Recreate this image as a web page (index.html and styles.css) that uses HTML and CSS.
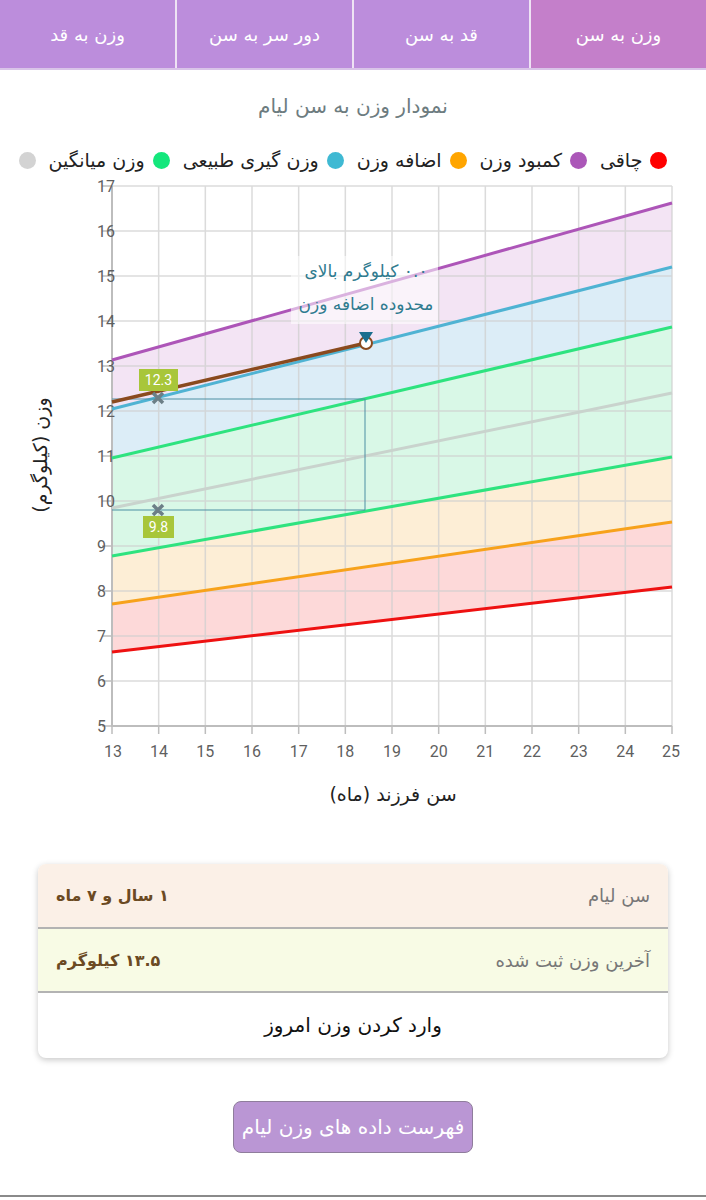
FILE: index.html
```html
<!DOCTYPE html>
<html lang="fa" dir="rtl">
<head>
    <meta charset="UTF-8">
    <meta name="viewport" content="width=device-width, initial-scale=1.0">
    <title>نمودار رشد</title>
    <link rel="stylesheet" href="styles.css">
</head>
<body>
    <div class="tabs">
        <div class="tab active">وزن به سن</div>
        <div class="tab">قد به سن</div>
        <div class="tab">دور سر به سن</div>
        <div class="tab">وزن به قد</div>
    </div>

    <h1 class="chart-title">نمودار وزن به سن لیام</h1>

    <div class="legend">
        <span class="dot red"></span><span class="legend-text">چاقی</span>
        <span class="dot purple"></span><span class="legend-text">کمبود وزن</span>
        <span class="dot orange"></span><span class="legend-text">اضافه وزن</span>
        <span class="dot blue"></span><span class="legend-text">وزن گیری طبیعی</span>
        <span class="dot green"></span><span class="legend-text">وزن میانگین</span>
        <span class="dot grey"></span>
    </div>

    <svg class="chart" viewBox="0 176 706 650" width="706" height="650">
        <!-- بازه ها -->
        <polygon points="112,654 672,589 672,524 112,606" fill="#fdd9d9"/>
        <polygon points="112,606 672,524 672,459 112,558" fill="#fdeed6"/>
        <polygon points="112,558 672,459 672,329 112,460" fill="#d9f8e7"/>
        <polygon points="112,460 672,329 672,269 112,411" fill="#dcedf7"/>
        <polygon points="112,411 672,269 672,205 112,362" fill="#f3e4f4"/>

        <!-- شبکه -->
        <path class="grid" d="M158.67 188V728M205.33 188V728M252 188V728M298.67 188V728M345.33 188V728M392 188V728M438.67 188V728M485.33 188V728M532 188V728M578.67 188V728M625.33 188V728M672 188V728
            M112 188H672M112 233H672M112 278H672M112 323H672M112 368H672M112 413H672M112 458H672M112 503H672M112 548H672M112 593H672M112 638H672M112 683H672"/>

        <!-- محورها -->
        <path class="ticks" d="M102 188H112M102 233H112M102 278H112M102 323H112M102 368H112M102 413H112M102 458H112M102 503H112M102 548H112M102 593H112M102 638H112M102 683H112M102 728H112
            M112 728V736M158.67 728V736M205.33 728V736M252 728V736M298.67 728V736M345.33 728V736M392 728V736M438.67 728V736M485.33 728V736M532 728V736M578.67 728V736M625.33 728V736M672 728V736"/>
        <line class="axis" x1="112" y1="188" x2="112" y2="729"/>
        <line class="axis" x1="111" y1="728" x2="672" y2="728"/>

        <g class="tick-y">
            <text x="97" y="194">17</text>
            <text x="97" y="239">16</text>
            <text x="97" y="284">15</text>
            <text x="97" y="329">14</text>
            <text x="97" y="374">13</text>
            <text x="97" y="419">12</text>
            <text x="97" y="464">11</text>
            <text x="97" y="509">10</text>
            <text x="97" y="554">9</text>
            <text x="97" y="599">8</text>
            <text x="97" y="644">7</text>
            <text x="97" y="689">6</text>
            <text x="97" y="734">5</text>
        </g>
        <g class="tick-x">
            <text x="113" y="759">13</text>
            <text x="159" y="759">14</text>
            <text x="205.33" y="759">15</text>
            <text x="252" y="759">16</text>
            <text x="298.67" y="759">17</text>
            <text x="345.33" y="759">18</text>
            <text x="392" y="759">19</text>
            <text x="438.67" y="759">20</text>
            <text x="485.33" y="759">21</text>
            <text x="532" y="759">22</text>
            <text x="578.67" y="759">23</text>
            <text x="625.33" y="759">24</text>
            <text x="671" y="759">25</text>
        </g>

        <!-- خطوط منحنی -->
        <line class="curve" x1="112" y1="654" x2="672" y2="589" stroke="#ee1111"/>
        <line class="curve" x1="112" y1="606" x2="672" y2="524" stroke="#f7a21b"/>
        <line class="curve" x1="112" y1="558" x2="672" y2="459" stroke="#2ee37f"/>
        <line class="curve" x1="112" y1="510" x2="672" y2="395" stroke="#c9d3cd"/>
        <line class="curve" x1="112" y1="460" x2="672" y2="329" stroke="#2ee37f"/>
        <line class="curve" x1="112" y1="411" x2="672" y2="269" stroke="#4fb3d3"/>
        <line class="curve" x1="112" y1="362" x2="672" y2="205" stroke="#ad55b8"/>

        <!-- راهنمای بازه -->
        <path class="guide" d="M112 401H365V512H112"/>

        <!-- داده کودک -->
        <line x1="112" y1="404" x2="366" y2="345" stroke="#8a4a1e" stroke-width="3.5"/>
        <circle cx="366" cy="345" r="6" fill="#fff" stroke="#8a4a1e" stroke-width="2"/>
        <polygon points="359,334 373,334 366,345" fill="#1b6e8e"/>

        <path class="cross" d="M153 395L163 405M163 395L153 405M153 507L163 517M163 507L153 517"/>
        <rect x="139" y="371" width="39" height="22" fill="#a8c63a"/>
        <text class="point-label" x="158.5" y="387">12.3</text>
        <rect x="143" y="518" width="31" height="22" fill="#a8c63a"/>
        <text class="point-label" x="158.5" y="534">9.8</text>

        <rect x="291" y="258" width="147" height="68" fill="#ffffff" fill-opacity="0.55"/>
        <text class="note" x="366" y="279">۰.۰ کیلوگرم بالای</text>
        <text class="note" x="366" y="312">محدوده اضافه وزن</text>

        <text class="axis-title" transform="translate(47 457) rotate(-90)">وزن (کیلوگرم)</text>
        <text class="axis-title" x="393" y="803">سن فرزند (ماه)</text>
    </svg>

    <div class="info-card">
        <div class="info-row age">
            <span class="info-label">سن لیام</span>
            <span class="info-value">۱ سال و ۷ ماه</span>
        </div>
        <div class="info-row weight">
            <span class="info-label">آخرین وزن ثبت شده</span>
            <span class="info-value">۱۳.۵ کیلوگرم</span>
        </div>
        <div class="info-action">وارد کردن وزن امروز</div>
    </div>

    <div class="list-wrap">
        <button class="list-btn">فهرست داده های وزن لیام</button>
    </div>

    <div class="bottom-line"></div>
</body>
</html>
```

FILE: styles.css
```css
/* پایه */
body {
    margin: 0;
    font-family: 'DejaVu Sans', 'Noto Sans', sans-serif;
    background-color: #ffffff;
    color: #222;
    width: 706px;
}

.tabs {
    display: flex;
    height: 68px;
    background-color: #bc8ddc;
    border-bottom: 2px solid #d9c4e8;
}

.tab {
    flex: 1;
    display: flex;
    align-items: center;
    justify-content: center;
    color: #ffffff;
    font-size: 18px;
    border-left: 2px solid #eee3f4;
}

.tab:last-child {
    border-left: none;
}

.tab.active {
    background-color: #c47fca;
}

.chart-title {
    margin: 0;
    padding-top: 18px;
    height: 36px;
    line-height: 36px;
    text-align: center;
    font-size: 20px;
    font-weight: normal;
    color: #6d7c80;
}

.legend {
    display: flex;
    align-items: center;
    justify-content: center;
    gap: 8px;
    height: 28px;
    margin-top: 22px;
    padding-right: 20px;
    font-size: 19px;
    color: #222;
}

.legend-text {
    margin-left: 5px;
}

.dot {
    width: 17px;
    height: 17px;
    border-radius: 50%;
    flex-shrink: 0;
}

.dot.red { background-color: #ff0000; }
.dot.purple { background-color: #ab57b8; }
.dot.orange { background-color: #ffa500; }
.dot.blue { background-color: #3fb9d3; }
.dot.green { background-color: #14e77c; }
.dot.grey { background-color: #d3d3d3; }

/* نمودار */
.chart {
    display: block;
}

.grid {
    fill: none;
    stroke: #cfcfcf;
    stroke-opacity: 0.75;
    stroke-width: 1.5;
}

.ticks {
    fill: none;
    stroke: #bdbdbd;
    stroke-width: 1.5;
}

.axis {
    stroke: #bdbdbd;
    stroke-width: 2;
}

.tick-y text,
.tick-x text {
    font-family: Roboto, 'Liberation Sans', sans-serif;
    font-size: 16px;
    fill: #5f5f5f;
}

.tick-y text {
    text-anchor: end;
}

.tick-x text {
    text-anchor: middle;
}

.curve {
    stroke-width: 3;
}

.guide {
    fill: none;
    stroke: #4d8fa3;
    stroke-width: 1;
}

.cross {
    stroke: #6c7f87;
    stroke-width: 3.5;
}

.point-label {
    font-family: Roboto, 'Liberation Sans', sans-serif;
    font-size: 14px;
    fill: #ffffff;
    text-anchor: middle;
}

.note {
    font-size: 17px;
    fill: #2f7b8f;
    text-anchor: middle;
}

.axis-title {
    font-size: 19px;
    fill: #222;
    text-anchor: middle;
}

/* کارت اطلاعات */
.info-card {
    margin: 40px 38px 0;
    border-radius: 8px;
    overflow: hidden;
    background-color: #ffffff;
    box-shadow: 0px 2px 6px rgba(0, 0, 0, 0.22);
}

.info-row {
    display: flex;
    align-items: center;
    justify-content: space-between;
    padding: 0 18px;
    border-bottom: 2px solid #b3b3b3;
}

.info-row.age {
    height: 63px;
    background-color: #fbf0e7;
}

.info-row.weight {
    height: 62px;
    background-color: #f8fbe5;
}

.info-label {
    font-size: 18px;
    color: #777;
}

.info-value {
    font-size: 16px;
    font-weight: bold;
    color: #6b4a23;
}

.info-action {
    height: 65px;
    line-height: 65px;
    text-align: center;
    font-size: 20px;
    color: #111;
}

.list-wrap {
    display: flex;
    justify-content: center;
    padding-top: 43px;
    height: 94px;
}

.list-btn {
    height: 52px;
    padding: 0 8px;
    font-family: 'DejaVu Sans', sans-serif;
    font-size: 20px;
    color: #ffffff;
    background-color: #ba96d4;
    border: 1px solid #8f7d9c;
    border-radius: 8px;
}

.bottom-line {
    height: 2px;
    background-color: #8a8a8a;
}
```
